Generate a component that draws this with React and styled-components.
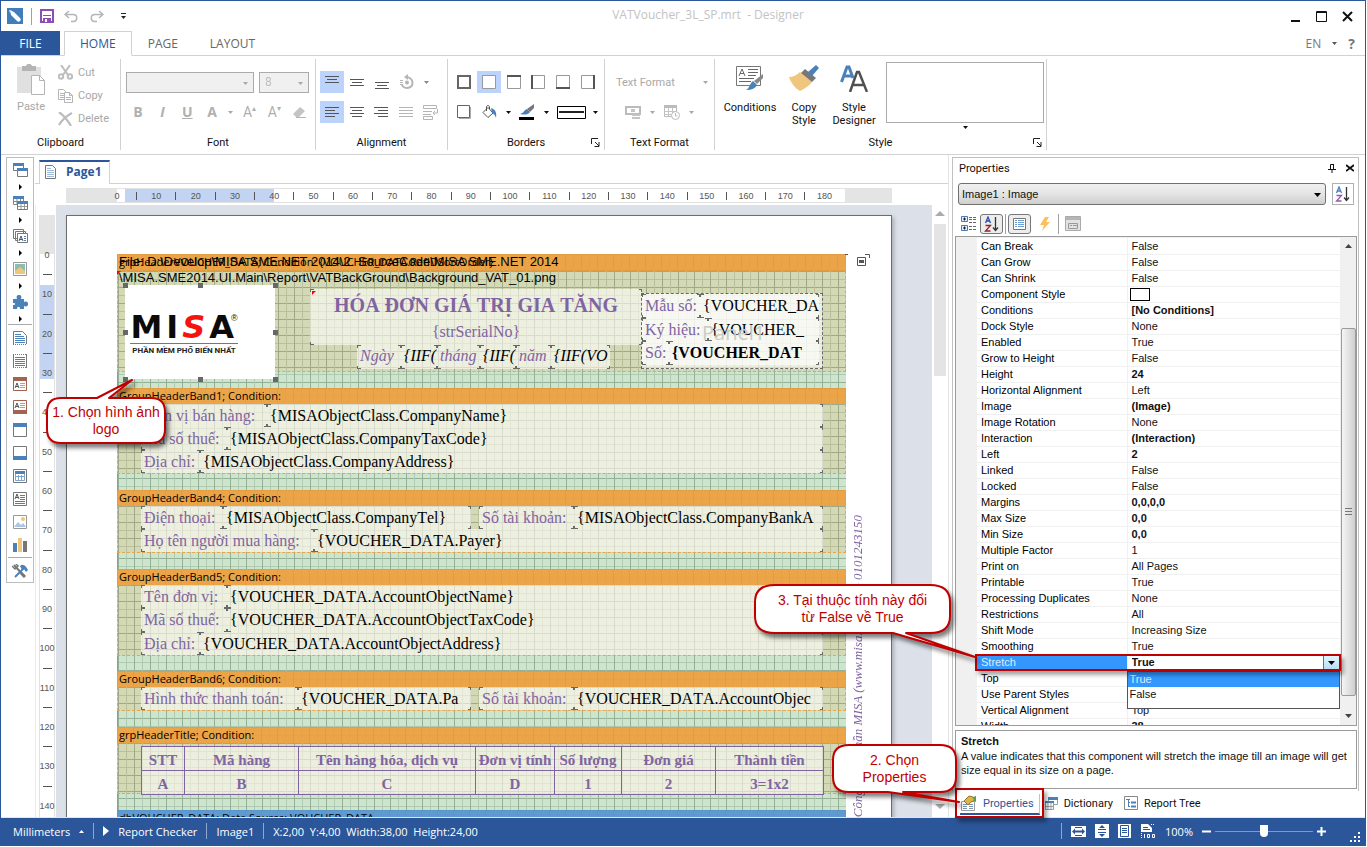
import React from 'react';
import styled, { createGlobalStyle, css } from 'styled-components';

const BLUE = '#2b579a';
const ORANGE = '#eba548';
const PURPLE = '#8064a2';
const RED = '#c00000';
const SANS = '"Liberation Sans", Arial, sans-serif';
const UI = '"Open Sans", "Noto Sans", sans-serif';
const RIBBON = 'Roboto, "Liberation Sans", sans-serif';
const SERIF = '"Liberation Serif", "Times New Roman", serif';

const Global = createGlobalStyle`
  * { box-sizing: border-box; }
  body { margin: 0; padding: 0 1px 1px 0; background: #fff; overflow: hidden; }
  button, select, input { font: inherit; color: inherit; margin: 0; padding: 0; border: 0; background: none; }
  button { cursor: pointer; }
  svg { display: block; flex: none; }
`;

const Window = styled.div`
  position: relative;
  display: flex;
  flex-direction: column;
  height: calc(100vh - 1px);
  border: 1px solid ${BLUE};
  border-bottom: 0;
  background: #fff;
  font: 12px ${UI};
  color: #111;
`;

/* ---------- title bar and tabs ---------- */

const TitleBar = styled.header`
  display: flex;
  align-items: center;
  height: 30px;
  padding: 0 12px 0 6px;
`;

const Quick = styled.div`
  display: flex;
  align-items: center;
  gap: 8px;
  flex: 1;
`;

const Title = styled.h1`
  margin: 0;
  padding: 0 0 4px 56px;
  font: 12px ${UI};
  color: #c3c3c3;
  white-space: pre;
`;

const WindowButtons = styled.div`
  display: flex;
  flex: 1;
  justify-content: flex-end;
  gap: 15px;
`;

const IconButton = styled.button`
  display: flex;
  align-items: center;
  justify-content: center;
  ${p => p.$w && `width: ${p.$w}px;`}
`;

const Rule = styled.span`
  width: 1px;
  height: ${p => p.$h || 16}px;
  background: ${p => p.$color || '#a0a0a0'};
`;

const Tabs = styled.nav`
  display: flex;
  align-items: stretch;
  height: 25px;
  padding-right: 10px;
  border-bottom: 1px solid #d2d2d2;
  color: #5a5a5a;
`;

const FileTab = styled.button`
  width: 59px;
  margin-right: 4px;
  background: ${BLUE};
  color: #fff;
`;

const Tab = styled.button`
  padding: 0 15px;
  margin-bottom: -1px;
  border: 1px solid ${p => (p.$active ? '#d2d2d2' : 'transparent')};
  border-bottom-color: ${p => (p.$active ? '#fff' : 'transparent')};
  color: ${p => (p.$active ? BLUE : '#666')};
`;

const Language = styled.div`
  display: flex;
  align-items: center;
  gap: 11px;
  margin-left: auto;
  color: #777;
  b { font-size: 14px; }
`;

/* ---------- ribbon ---------- */

const Ribbon = styled.div`
  display: flex;
  height: 99px;
  padding: 3px 0 4px;
  border-bottom: 1px solid #d2d2d2;
  font: 11px ${RIBBON};
`;

const Group = styled.section`
  position: relative;
  display: flex;
  flex-direction: column;
  width: ${p => p.$w}px;
  border-right: 1px solid #d2d2d2;
  padding: 0 4px;
`;

const GroupBody = styled.div`
  flex: 1;
  display: flex;
  flex-direction: ${p => (p.$rows ? 'column' : 'row')};
  gap: ${p => p.$gap || 0}px;
  padding: ${p => p.$pad || 0}px 0 0 ${p => p.$left || 0}px;
  color: ${p => (p.$off ? '#a8a8a8' : '#111')};
`;

const GroupName = styled.h2`
  margin: 0;
  height: 15px;
  font: 11px/15px ${RIBBON};
  text-align: center;
`;

const Launcher = styled.button`
  position: absolute;
  right: 4px;
  bottom: 3px;
`;

const Line = styled.div`
  display: flex;
  align-items: center;
  gap: ${p => p.$gap || 0}px;
  height: 22px;
  white-space: nowrap;
`;

const Cell = styled.button`
  display: flex;
  align-items: center;
  justify-content: center;
  width: ${p => p.$w || 24}px;
  height: 22px;
  background: ${p => (p.$on ? '#bcd3fb' : 'none')};
`;

const Glyph = styled.span`
  font: ${p => (p.$bold ? 'bold' : 'normal')} 14px/16px ${p => (p.$bold ? UI : RIBBON)};
  color: #b0b0b0;
  sup { font-size: 8px; line-height: 8px; }
`;

const BigButton = styled.button`
  display: flex;
  flex: none;
  flex-direction: column;
  align-items: center;
  gap: 5px;
  width: ${p => p.$w}px;
  padding-top: 3px;
  line-height: 13px;
  span { height: 31px; }
`;

const SmallButton = styled.button`
  display: flex;
  align-items: center;
  gap: 5px;
  height: 23px;
`;

const Combo = styled.span`
  position: relative;
  display: flex;
  width: ${p => p.$w}px;
  height: 21px;
  border: 1px solid #ababab;
  background: #f0f0f0;
  select {
    appearance: none;
    width: 100%;
    padding-left: 5px;
    font-size: 12px;
  }
  svg { position: absolute; right: 5px; top: 9px; }
`;

const Gallery = styled.div`
  width: 158px;
  height: 61px;
  border: 1px solid #ababab;
`;

const GalleryBox = styled.div`
  display: flex;
  flex: none;
  flex-direction: column;
  align-items: center;
  gap: 3px;
  margin-left: 5px;
`;

/* ---------- workspace ---------- */

const Workspace = styled.main`
  flex: 1;
  min-height: 0;
  display: flex;
`;

const Toolbox = styled.aside`
  align-self: flex-start;
  display: flex;
  flex-direction: column;
  align-items: center;
  width: 28px;
  margin: 2px 1px 0 5px;
  border: 1px solid #bdbdbd;
`;

const Tool = styled.button`
  display: flex;
  align-items: center;
  justify-content: center;
  width: 26px;
  height: ${p => (p.$menu ? 24 : 23)}px;
`;

const ToolMenu = styled.button`
  display: flex;
  align-items: center;
  justify-content: center;
  width: 26px;
  height: 9px;
`;

const ToolRule = styled.span`
  width: 24px;
  height: 1px;
  margin: 1px 0;
  background: #ababab;
`;

const Editor = styled.section`
  flex: 1;
  min-width: 0;
  display: flex;
  flex-direction: column;
  padding-top: 5px;
  margin-right: 3px;
  border-right: 1px solid #e4e4e4;
`;

const PageTabs = styled.div`
  display: flex;
  height: 24px;
  padding-left: 4px;
  border-bottom: 1px solid #d2d2d2;
`;

const PageTab = styled.button`
  display: flex;
  align-items: center;
  gap: 10px;
  width: 71px;
  padding: 0 0 3px 5px;
  margin-bottom: -1px;
  border: 1px solid #d2d2d2;
  border-top: 2px solid ${BLUE};
  border-bottom: 0;
  background: #fff;
  color: ${BLUE};
  font: bold 12px ${UI};
`;

const HRuler = styled.div`
  display: flex;
  width: 826px;
  height: 15px;
  margin: 4px 0 2px 31px;
  border: solid #e2e2e2;
  border-width: 1px 0;
  background: #e4e4e4;
`;

const HScale = styled.div`
  flex: 1;
  margin: 0 47px 0 51px;
  padding-right: 20px;
  display: flex;
  align-items: center;
  justify-content: space-between;
  background: linear-gradient(90deg, #fff 8px, #c2d4f2 8px 157px, #fff 157px);
`;

const Mark = styled.span`
  display: flex;
  align-items: center;
  justify-content: center;
  width: 0;
  height: 0;
  font: 9px ${SANS};
  color: #555;
  &::before {
    content: '';
    flex: none;
    width: ${p => (p.$tick ? (p.$vertical ? 9 : 1) : 0)}px;
    height: ${p => (p.$tick ? (p.$vertical ? 1 : 8) : 0)}px;
    background: #555;
  }
`;

const Desk = styled.div`
  flex: 1;
  min-height: 0;
  display: flex;
  border-left: 1px solid #ececec;
`;

const VRuler = styled.div`
  width: 16px;
  margin: 10px 1px 0 3px;
  padding-top: 40px;
  display: flex;
  flex-direction: column;
  border: solid #e2e2e2;
  border-width: 0 1px;
  background: linear-gradient(#e4e4e4 39px, #fff 39px 70px, #c2d4f2 70px 164px, #fff 164px);
`;

const VScale = styled.div`
  height: 551px;
  flex: none;
  display: flex;
  flex-direction: column;
  align-items: center;
  justify-content: space-between;
`;

const Canvas = styled.div`
  flex: 1;
  min-width: 0;
  overflow: hidden;
  padding: 10px;
  background: #dce1e9;
`;

const Scroller = styled.div`
  width: 16px;
  display: flex;
  flex-direction: column;
  align-items: center;
  justify-content: space-between;
  padding: 5px 0 7px;
`;

const Thumb = styled.span`
  width: 12px;
  height: 152px;
  margin: 8px 0 auto;
  background: #e4e4e4;
`;

const Paper = styled.article`
  position: relative;
  width: 826px;
  height: 900px;
  padding: 38px 45px 0 50px;
  border: 1px solid #6c6c6c;
  background: #fff;
  box-shadow: 2px 2px 4px #a9adb5;
  font: 16px/24px ${SERIF};
  color: #000;
  * { font-kerning: none; }
`;

/* ---------- bands ---------- */

const grid = (strong, weak) => css`
  background-image:
    linear-gradient(90deg, ${strong} 1px, transparent 1px),
    linear-gradient(90deg, transparent 8px, ${weak} 8px, ${weak} 9px, transparent 9px),
    linear-gradient(${strong} 1px, transparent 1px),
    linear-gradient(transparent 8px, ${weak} 8px, ${weak} 9px, transparent 9px);
  background-size: 16px 16px;
`;

const Report = styled.div`
  width: 729px;
  border-left: 1px solid #8aa287;
  ${grid('#94b096', '#afcab0')}
  background-color: #cde5cd;
`;

const BandHead = styled.div`
  height: ${p => p.$h || 16}px;
  margin-left: -1px;
  padding-left: 2px;
  ${grid('#e29d43', '#e7a146')}
  background-color: ${p => p.$color || ORANGE};
  font: 11px/15px ${UI};
  white-space: nowrap;
`;

const DataHead = styled(BandHead)`
  ${grid('#5a94c9', '#5d98ce')}
`;

const BandBody = styled.div`
  position: relative;
  display: flex;
  flex-direction: column;
  height: ${p => p.$h}px;
  margin: 0 0 ${p => p.$after || 16}px -1px;
  padding: 0 22px 0 23px;
  border: 1px dashed ${ORANGE};
  border-top: 0;
  ${grid('#a1a888', '#bac09c')}
  background-color: #d3d9b4;
`;

const FieldRow = styled.div`
  flex: 1;
  min-height: 0;
  display: flex;
`;

const corner = '#66696a';

// small brackets in the four corners of every component
const brackets = css`
  background:
    linear-gradient(${corner}, ${corner}) 0 0 / 4px 1px,
    linear-gradient(${corner}, ${corner}) 0 0 / 1px 3px,
    linear-gradient(${corner}, ${corner}) 100% 0 / 3px 1px,
    linear-gradient(${corner}, ${corner}) 100% 0 / 1px 3px,
    linear-gradient(${corner}, ${corner}) 0 100% / 4px 1px,
    linear-gradient(${corner}, ${corner}) 0 100% / 1px 3px,
    linear-gradient(${corner}, ${corner}) 100% 100% / 3px 1px,
    linear-gradient(${corner}, ${corner}) 100% 100% / 1px 3px,
    rgba(255, 255, 255, 0.58);
  background-repeat: no-repeat;
`;

const Field = styled.div`
  ${p => (p.$w ? `width: ${p.$w}px; flex: none;` : 'flex: 1; min-width: 0;')}
  margin-right: ${p => p.$after || 0}px;
  padding-left: 3px;
  overflow: hidden;
  white-space: nowrap;
  color: ${p => (p.$label ? PURPLE : '#000')};
  font-weight: ${p => (p.$bold ? 'bold' : 'normal')};
  ${brackets}
`;

// component placed freely inside the page header band
const Placed = styled.div`
  position: absolute;
  left: ${p => p.$x}px;
  top: ${p => p.$y}px;
  width: ${p => p.$w}px;
  height: ${p => p.$h}px;
`;

const TitleBox = styled(Placed)`
  ${brackets}
  text-align: center;
  color: ${PURPLE};
  line-height: 20px;
  strong {
    display: block;
    font-size: 20px;
    line-height: 33px;
  }
`;

const DateRow = styled(Placed)`
  display: flex;
  font-style: italic;
  line-height: 22px;
`;

const Panel = styled(Placed)`
  display: flex;
  flex-direction: column;
  padding: 0 3px 3px 0;
  border: 1px dashed #66696a;
  background: rgba(255, 255, 255, 0.56);
`;

const PanelName = styled.span`
  position: absolute;
  left: 60px;
  top: 25px;
  font: 20px/28px ${UI};
  color: #c9ccc6;
`;

const FileNote = styled(Placed)`
  font: 13px/16px ${SANS};
  white-space: nowrap;
`;

const Flag = styled(Placed)`
  border-top: 4px solid #f00;
  border-right: 4px solid transparent;
`;

const Picture = styled(Placed)`
  display: flex;
  flex-direction: column;
  align-items: center;
  padding: 27px 32px 0 0;
  background: #fff;
`;

const Brand = styled.div`
  display: flex;
  align-items: flex-start;
  gap: 4px;
  border-bottom: 1px solid #777;
  font: bold 32px/31px "DejaVu Sans", sans-serif;
  color: #0d0a0a;
  em { color: #f5130f; }
  sup { font: 9px/12px ${SANS}; margin-left: -7px; }
`;

const Slogan = styled.div`
  font: bold 8px/13px Roboto, sans-serif;
  color: #222;
  white-space: nowrap;
`;

const Handle = styled.i`
  position: absolute;
  left: ${p => p.$x}px;
  top: ${p => p.$y}px;
  width: 5px;
  height: 5px;
  background: #66696a;
`;

const Columns = styled.table`
  width: 100%;
  height: 47px;
  margin-top: 3px;
  table-layout: fixed;
  border-collapse: collapse;
  background: rgba(255, 255, 255, 0.56);
  color: ${PURPLE};
  font: bold 15px/20px ${SERIF};
  white-space: nowrap;
  th, td {
    height: 23px;
    padding: 3px 0 0;
    border: 1px solid ${PURPLE};
    text-align: center;
  }
`;

const Imprint = styled.div`
  position: absolute;
  right: 24px;
  top: 299px;
  writing-mode: vertical-rl;
  transform: rotate(180deg);
  font: italic 13px/18px ${SERIF};
  color: ${PURPLE};
  white-space: nowrap;
`;

const PageMarker = styled.div`
  position: absolute;
  right: 21px;
  top: 37px;
`;

/* ---------- properties panel ---------- */

const Side = styled.aside`
  width: 407px;
  margin: 2px 6px 0 0;
  display: flex;
  flex-direction: column;
  font: 11px ${SANS};
`;

const SideFrame = styled.section`
  flex: 1;
  min-height: 0;
  display: flex;
  flex-direction: column;
  padding: 0 1px 2px 2px;
  border: solid #c0c0c0;
  border-width: 1px 1px 0;
`;

const SideHead = styled.header`
  display: flex;
  align-items: center;
  gap: 10px;
  height: 20px;
  padding: 0 3px 0 4px;
  font: 11px ${RIBBON};
  span { flex: 1; }
`;

const PickerRow = styled.div`
  display: flex;
  gap: 6px;
  padding: 5px 3px 6px 3px;
`;

const Picker = styled.span`
  position: relative;
  flex: 1;
  height: 22px;
  border: 1px solid #707070;
  border-radius: 3px;
  background: linear-gradient(#f0f0f0, #e4e4e4 50%, #cfcfcf);
  select {
    appearance: none;
    width: 100%;
    height: 20px;
    padding-left: 3px;
  }
  svg { position: absolute; right: 4px; top: 9px; }
`;

const SortButton = styled.button`
  width: 22px;
  height: 22px;
  display: flex;
  align-items: center;
  justify-content: center;
  border: 1px solid #b0b0b0;
`;

const PropTools = styled.div`
  display: flex;
  align-items: center;
  gap: 2px;
  height: 25px;
  padding-left: 6px;
`;

const PropTool = styled.button`
  display: flex;
  align-items: center;
  justify-content: center;
  width: 23px;
  height: 20px;
  border: ${p => (p.$on ? '1px solid #777' : '0')};
  border-radius: 3px;
  background: ${p => (p.$on ? '#ededed' : 'none')};
`;

const PropFrame = styled.div`
  flex: 1;
  min-height: 0;
  display: flex;
  border: 1px solid #9b9b9b;
  overflow: hidden;
  background: #f0f0f0;
`;

const PropTable = styled.table`
  flex: 1;
  align-self: flex-start;
  margin: 1px 0 0 21px;
  border-collapse: collapse;
  border-top: 1px solid #fff;
  table-layout: fixed;
  background: #fff;
  th, td {
    position: relative;
    height: 16px;
    padding: 0 0 0 4px;
    border-bottom: 1px solid #f0f0f0;
    text-align: left;
    line-height: 15px;
  }
  th {
    width: 150px;
    border-right: 1px solid #f0f0f0;
    font-weight: normal;
  }
`;

const PropRow = styled.tr`
  th {
    background: ${p => (p.$selected ? '#3397fd' : 'none')};
    color: ${p => (p.$selected ? '#dcecff' : '#000')};
  }
  td { font-weight: ${p => (p.$bold ? 'bold' : 'normal')}; }
`;

const Swatch = styled.span`
  display: block;
  width: 20px;
  height: 13px;
  margin-left: -2px;
  border: 1px solid #000;
`;

const ValueSelect = styled.span`
  display: flex;
  height: 15px;
  select {
    appearance: none;
    flex: 1;
    font-weight: bold;
  }
  i {
    display: flex;
    align-items: center;
    justify-content: center;
    width: 17px;
    border: 1px solid #3c7fb1;
    background: linear-gradient(#e3f4fc, #b5def5);
  }
`;

const Options = styled.ul`
  position: absolute;
  z-index: 2;
  left: -1px;
  right: 0;
  top: 16px;
  height: 38px;
  margin: 0;
  padding: 0;
  border: 1px solid #555;
  background: #fff;
  font-weight: normal;
  list-style: none;
  li { height: 15px; padding-left: 2px; line-height: 15px; }
  li[aria-selected='true'] { background: #3397fd; color: #dcecff; }
`;

const PropScroll = styled.div`
  width: 16px;
  display: flex;
  flex-direction: column;
  align-items: center;
  justify-content: space-between;
  padding: 7px 0;
`;

const PropThumb = styled.span`
  display: flex;
  align-items: center;
  justify-content: center;
  width: 15px;
  height: 368px;
  margin: auto 0 18px;
  border: 1px solid #9a9a9a;
  border-radius: 2px;
  background: linear-gradient(90deg, #f5f5f5, #e2e2e2 50%, #cfcfd0);
`;

const Hint = styled.div`
  height: 59px;
  margin-top: 4px;
  padding: 3px 5px;
  border: 1px solid #9b9b9b;
  line-height: 14px;
  strong { display: block; line-height: 15px; }
`;

const SideTabs = styled.div`
  display: flex;
  align-items: center;
  gap: 5px;
  height: 26px;
  padding-left: 8px;
  font: 11px ${RIBBON};
`;

const SideTab = styled.button`
  display: flex;
  align-items: center;
  gap: 6px;
  height: 21px;
  padding-right: 5px;
  border-right: 1px solid ${p => (p.$active ? '#c0c0c0' : 'transparent')};
  border-bottom: 2px solid ${p => (p.$active ? BLUE : 'transparent')};
  color: ${p => (p.$active ? BLUE : '#111')};
`;

/* ---------- status bar ---------- */

const Status = styled.footer`
  display: flex;
  align-items: center;
  gap: 9px;
  height: 29px;
  padding: 0 4px 2px 12px;
  border-top: 1px solid #dfe6f0;
  background: ${BLUE};
  color: #fff;
  font: 11px ${UI};
  white-space: pre;
`;

const Spacer = styled.span`
  flex: 1;
`;

const ZoomGroup = styled.div`
  display: flex;
  align-items: center;
  gap: 4px;
`;

const Zoom = styled.input`
  appearance: none;
  width: 98px;
  height: 14px;
  background: linear-gradient(#7d9bc9, #7d9bc9) 0 50% / 100% 1px no-repeat;
  &::-webkit-slider-thumb {
    appearance: none;
    width: 8px;
    height: 12px;
    border-radius: 0 0 4px 4px;
    background: #fff;
  }
`;

/* ---------- callouts ---------- */

const Callout = styled.div`
  position: absolute;
  z-index: 5;
  left: ${p => p.$x}px;
  top: ${p => p.$y}px;
  width: ${p => p.$w}px;
  height: ${p => p.$h}px;
  display: flex;
  align-items: center;
  justify-content: center;
  text-align: center;
  font: 14px/17px ${SANS};
  color: ${RED};
  svg {
    position: absolute;
    left: 0;
    top: 0;
    overflow: visible;
    filter: drop-shadow(3px 4px 2px rgba(0, 0, 0, 0.5));
  }
  span { position: relative; white-space: pre; }
`;

const Frame = styled.div`
  position: absolute;
  z-index: 4;
  inset: ${p => p.$inset};
  border: 2px solid ${RED};
  box-shadow: 3px 4px 4px rgba(0, 0, 0, 0.35);
  pointer-events: none;
`;

const SideTabWrap = styled.div`
  position: relative;
  display: flex;
`;

/* ---------- icons ---------- */

const Svg = ({ w = 16, h = w, children }) => (
  <svg width={w} height={h} viewBox={`0 0 ${w} ${h}`} fill="none" aria-hidden="true">
    {children}
  </svg>
);

const Down = ({ c = '#111' }) => (
  <Svg w={5} h={3}><path d="M0 0h5L2.500 3z" fill={c} /></Svg>
);

const Lines = ({ rows, c = '#555' }) => (
  <Svg w={14} h={16}>
    {rows.map(([x, y, w]) => <path key={y} d={`M${x} ${y}.5h${w}`} stroke={c} />)}
  </Svg>
);

const Box = ({ side }) => (
  <Svg w={14} h={14}>
    <path d="M.5.5h13v13H.5z" stroke={side === 'all' ? '#666' : '#999'} fill="#fff" />
    {side === 'all' && <path d="M1 1h12v12H1z" stroke="#666" strokeWidth="2" />}
    {side === 'top' && <path d="M0 1h14" stroke="#555" strokeWidth="2" />}
    {side === 'left' && <path d="M1 0v14" stroke="#555" strokeWidth="2" />}
    {side === 'bottom' && <path d="M0 13h14" stroke="#555" strokeWidth="2" />}
    {side === 'right' && <path d="M13 0v14" stroke="#555" strokeWidth="2" />}
  </Svg>
);

const ShadowIcon = () => (
  <Svg w={14} h={14}>
    <path d="M2 13.500h11.500V2" stroke="#aaa" />
    <path d="M.5.5h12v12H.5z" stroke="#666" fill="#fff" />
  </Svg>
);

const AppIcon = () => (
  <Svg>
    <path d="M0 0h16v16H0z" fill="#3f7dbd" />
    <path d="M3 2l4 2 6 6c1 1 1 2 0 3s-2 1-3 0L4 7z" fill="#fff" />
    <path d="M2 2l3 1-2 2z" fill="#dcebf8" />
  </Svg>
);

const SaveIcon = () => (
  <Svg w={14}>
    <path d="M1 1h12v12H1z" stroke="#8c4db5" strokeWidth="2" />
    <path d="M3 6.500h8" stroke="#8c4db5" />
    <path d="M3 9h8v4H3z" fill="#8c4db5" />
    <path d="M5 10h2v3H5z" fill="#fff" />
  </Svg>
);

const UndoIcon = ({ flip }) => (
  <Svg w={14} h={13}>
    <g transform={flip ? 'translate(14 0) scale(-1 1)' : undefined} stroke="#b5b5b5" strokeWidth="1.500">
      <path d="M5 1L1 4.500 5 8M1 4.500h8c5 0 5 7 0 7H7" />
    </g>
  </Svg>
);

const PasteIcon = () => (
  <Svg w={28} h={31}>
    <path d="M0 3h24v26H0z" fill="#e0e0e0" />
    <path d="M5 2h4c1-3 5-3 6 0h4v5H5z" fill="#b4b4b4" />
    <path d="M14.500 11.500h8l5 5v14h-13z" fill="#fff" stroke="#b4b4b4" />
    <path d="M22.500 11.500v5h5" stroke="#b4b4b4" />
  </Svg>
);

const CutIcon = () => (
  <Svg w={15} h={15}>
    <g stroke="#bdbdbd" strokeWidth="2">
      <path d="M3 0l7 10M12 0L5 10" />
      <circle cx="3" cy="11.500" r="2.200" />
      <circle cx="12" cy="11.500" r="2.200" />
    </g>
  </Svg>
);

const CopyIcon = () => (
  <Svg w={15} h={14}>
    <g stroke="#b5b5b5">
      <path d="M.5.5h5l2 2v8h-7zM2 4.500h4M2 6.500h4M2 8.500h4" />
      <path d="M6.500 3.500h5l3 3v7h-8z" fill="#fff" />
      <path d="M8 8.500h5M8 10.500h5M11.500 3.500v3h3" />
    </g>
  </Svg>
);

const DeleteIcon = () => (
  <Svg w={15} h={14}>
    <path d="M1 0c4 3 8 7 12 14M14 1C8 4 4 8 1 13" stroke="#bdbdbd" strokeWidth="2.200" />
  </Svg>
);

const RotateIcon = () => (
  <Svg w={14} h={16}>
    <path d="M6 3c8 0 9 11 1 11-3 0-5-2-5-4" stroke="#b5b5b5" strokeWidth="2" />
    <path d="M8 0v6L4 3z" fill="#b5b5b5" />
    <circle cx="7" cy="8.500" r="2" fill="#b5b5b5" />
    <path d="M0 6.500h3M0 8.500h3M0 10.500h3" stroke="#b5b5b5" />
  </Svg>
);

const WrapIcon = () => (
  <Svg w={16} h={15}>
    <g stroke="#b5b5b5">
      <path d="M.5.5h13v3H.5zM0 6.500h9M0 9.500h8M.5 11.500h9v3h-9z" />
      <path d="M14.500 4v4H10M12 6l-2 2 2 2" />
    </g>
  </Svg>
);

const EraserIcon = () => (
  <Svg w={14} h={14}>
    <path d="M1 9l7-7 5 4-6 6H4z" fill="#c4c4c4" />
    <path d="M4 12.500h10" stroke="#b5b5b5" />
  </Svg>
);

const PaintIcon = () => (
  <Svg w={15} h={14}>
    <path d="M6 2.500L11 8l-5 4.500L1 7.500z" stroke="#555" />
    <path d="M4.500 6V2c0-2 3-2 3 0v2" stroke="#555" />
    <path d="M9 3c4 1 6 4 5 10-1-3-2-4-4-5z" fill="#4a81b8" />
  </Svg>
);

const PenIcon = () => (
  <Svg w={16} h={16}>
    <path d="M15 0v4l-4 4-3-3z" fill="#777" />
    <path d="M8 5l3 3c-2 3-6 3-10 2 4-1 4-4 7-5z" fill="#4a81b8" />
    <path d="M0 13h15v3H0z" fill="#000" />
  </Svg>
);

const MoneyIcon = () => (
  <Svg w={16} h={15}>
    <path d="M1 2h14v7H1z" stroke="#bbb" strokeWidth="2" />
    <path d="M6 4h4v3H6zM7 9h8v5H7z" fill="#c4c4c4" />
    <path d="M7 11.500h8" stroke="#fff" />
  </Svg>
);

const DateIcon = () => (
  <Svg w={16} h={16}>
    <path d="M.5 1.500h12v11H.5z" stroke="#bbb" />
    <path d="M0 1h13v3H0z" fill="#bbb" />
    <path d="M0 7.500h12M0 10.500h12M4.500 4v8M8.500 4v8" stroke="#c4c4c4" />
    <circle cx="11.500" cy="11.500" r="4" fill="#fff" stroke="#bbb" />
    <path d="M11.500 9v3h2" stroke="#bbb" />
  </Svg>
);

const ConditionsIcon = () => (
  <Svg w={28} h={26}>
    <path d="M.5 1.500h24v19H.5z" stroke="#777" fill="#fff" />
    <path d="M3 11l3-7 3 7M4 8.500h4M12 4.500h10M12 7.500h10M12 10.500h8M3 13.500h15M3 16.500h12" stroke="#666" />
    <path d="M27 9v4l-6 6-3-3z" fill="#888" />
    <path d="M17 16l4 4c-2 4-6 5-11 5 4-2 3-6 7-9z" fill="#4a81b8" />
  </Svg>
);

const BroomIcon = () => (
  <Svg w={30} h={26}>
    <path d="M0 12c4 0 8-2 11-5l12 10c-2 3-6 6-12 9C6 23 2 18 0 12z" fill="#efc67b" />
    <path d="M12 8l4-4 11 9-4 4z" fill="#777" />
    <path d="M19 7l8-7 3 3-7 8z" fill="#4a81b8" />
  </Svg>
);

const DesignerIcon = () => (
  <Svg w={28} h={27}>
    <path d="M1.500 17L7 2h2l4 11M4 11h8" stroke="#4a81b8" strokeWidth="3" />
    <path d="M10 27l7-20h2l8 20M13 20h12" stroke="#505050" strokeWidth="2.500" />
  </Svg>
);

const LauncherIcon = () => (
  <Svg w={9} h={9}>
    <path d="M.5 6V.5H7M4 4l4 4M8 4v4.500H3.500" stroke="#222" />
  </Svg>
);

const PageIcon = () => (
  <Svg w={11} h={14}>
    <path d="M.5.5h7l3 3v10H.5z" stroke="#777" />
    <path d="M2 3.500h4M2 5.500h7M2 7.500h7M2 9.500h7M2 11.500h7" stroke="#9cbbdc" />
  </Svg>
);

const Sheet = ({ head = '#4a81b8', children, line = '#777' }) => (
  <Svg w={14} h={14}>
    <path d="M.5.5h13v13H.5z" stroke={line} fill="#fff" />
    {head && <path d="M0 0h14v4H0z" fill={head} />}
    {children}
  </Svg>
);

const tools = {
  bands: (
    <Svg w={15} h={14}>
      <path d="M.5.5h10v7H.5z" stroke="#777" fill="#fff" /><path d="M0 0h11v3H0z" fill="#4a81b8" />
      <path d="M4.500 5.500h10v8h-10z" stroke="#777" fill="#fff" /><path d="M4 5h11v3H4z" fill="#4a81b8" />
    </Svg>
  ),
  cross: (
    <Svg w={15} h={14}>
      <path d="M.5.5h10v8H.5zM4 1v7M7.500 1v7M1 5.500h9" stroke="#888" /><path d="M0 0h11v3H0z" fill="#4a81b8" />
      <path d="M4.500 5.500h10v8h-10z" stroke="#777" fill="#fff" /><path d="M8 6v7M11.500 6v7M5 10.500h9" stroke="#999" />
      <path d="M4 5h11v3H4z" fill="#4a81b8" />
    </Svg>
  ),
  texts: (
    <Svg w={15} h={14}>
      <path d="M.5.5h10v9H.5zM2.500 2.500h10v9h-10z" stroke="#777" fill="#fff" />
      <path d="M4.500 4.500h10v9h-10z" stroke="#777" fill="#fff" />
      <path d="M6 12l2-5 2 5M7 10.500h2" stroke="#555" /><path d="M11 7.500h2M11 9.500h2M11 11.500h2" stroke="#4a81b8" />
    </Svg>
  ),
  picture: (
    <Sheet head={null} line="#999">
      <path d="M2 2h10v9H2z" fill="#8fbcae" /><path d="M2 12V9l5-4 5 4v3z" fill="#efc67b" />
    </Sheet>
  ),
  puzzle: (
    <Svg w={15} h={14}>
      <path d="M0 4h4c-1-3 0-4 2-4s3 1 2 4h3v3c3-1 4 0 4 2s-1 3-4 2v3H7c0-3-3-3-3 0H0v-4c3 0 3-2 0-2z" fill="#4a81b8" />
    </Svg>
  ),
  torn1: (
    <Svg w={14} h={14}>
      <path d="M.5 13V.5h9l4 4V13" stroke="#777" /><path d="M0 13.500h14" stroke="#777" strokeDasharray="1 1" />
      <path d="M2 3.500h6M2 5.500h9M2 7.500h10M2 9.500h10M2 11.500h10" stroke="#4a81b8" />
    </Svg>
  ),
  torn2: (
    <Svg w={14} h={14}>
      <path d="M.5 0v14M13.500 0v14" stroke="#777" /><path d="M0 .5h14M0 13.500h14" stroke="#777" strokeDasharray="1 1" />
      <path d="M2 3.500h10M2 5.500h10M2 7.500h10M2 9.500h10M2 11.500h10" stroke="#4a81b8" />
    </Svg>
  ),
  head: (
    <Sheet head="#a5624f" line="#a5624f">
      <path d="M2 11l2-5 2 5M3 9.500h2" stroke="#555" /><path d="M7 6.500h5M7 8.500h5M7 10.500h5" stroke="#c79a8c" />
    </Sheet>
  ),
  foot: (
    <Sheet head={null} line="#a5624f">
      <path d="M0 10h14v4H0z" fill="#a5624f" />
      <path d="M2 8l2-5 2 5M3 6.500h2" stroke="#555" /><path d="M7 3.500h5M7 5.500h5M7 7.500h5" stroke="#c79a8c" />
    </Sheet>
  ),
  top: <Sheet />,
  bottom: <Sheet head={null}><path d="M0 10h14v4H0z" fill="#4a81b8" /></Sheet>,
  calendar: (
    <Sheet head={null}>
      <path d="M2.500 3.500h9v8h-9zM3 7.500h8M5.500 6v5M8.500 6v5" stroke="#7fa5cd" /><path d="M2 2h10v3H2z" fill="#4a81b8" />
    </Sheet>
  ),
  rich: (
    <Sheet head={null}>
      <path d="M2 7l2-5 2 5M3 5.500h2" stroke="#555" /><path d="M7 3.500h5M7 5.500h5M7 7.500h5M2 9.500h10M2 11.500h10" stroke="#4a81b8" />
    </Sheet>
  ),
  image: (
    <Sheet head={null} line="#999">
      <circle cx="10" cy="4" r="2" fill="#efc67b" /><path d="M1 12l4-5 3 3 2-2 3 4z" fill="#aac6e2" />
    </Sheet>
  ),
  chart: (
    <Svg w={14} h={14}>
      <path d="M0 5h4v9H0z" fill="#4a81b8" /><path d="M5 0h4v14H5z" fill="#efc67b" /><path d="M10 3h4v11h-4z" fill="#777" />
    </Svg>
  ),
  hammer: (
    <Svg w={16} h={14}>
      <path d="M2 1l10 11" stroke="#777" strokeWidth="2" /><path d="M0 2l3 3 3-3-2-2" stroke="#777" strokeWidth="1.500" />
      <path d="M3 13l9-9" stroke="#4a81b8" strokeWidth="2" /><path d="M8 2c3-3 6 0 8 4l-2 2-2-3-2 1z" fill="#4a81b8" />
      <path d="M9 9l4 4" stroke="#777" strokeWidth="3" />
    </Svg>
  ),
};

const SortIcon = ({ a = '#4a81b8', z = '#9257b5' }) => (
  <Svg w={16} h={16}>
    <path d="M1.500 7l2.500-6 2.500 6M2.500 5h3" stroke={a} strokeWidth="1.300" />
    <path d="M1.500 9.500h5l-5 5.500h5" stroke={z} strokeWidth="1.300" />
    <path d="M11.500 1v13M9 11.500l2.500 3 2.500-3" stroke="#333" strokeWidth="1.300" />
  </Svg>
);

/* ---------- data ---------- */

const properties = [
  ['Can Break', 'False'], ['Can Grow', 'False'], ['Can Shrink', 'False'], ['Component Style', null],
  ['Conditions', '[No Conditions]', true], ['Dock Style', 'None'], ['Enabled', 'True'],
  ['Grow to Height', 'False'], ['Height', '24', true], ['Horizontal Alignment', 'Left'],
  ['Image', '(Image)', true], ['Image Rotation', 'None'], ['Interaction', '(Interaction)', true],
  ['Left', '2', true], ['Linked', 'False'], ['Locked', 'False'], ['Margins', '0,0,0,0', true],
  ['Max Size', '0,0', true], ['Min Size', '0,0', true], ['Multiple Factor', '1'],
  ['Print on', 'All Pages'], ['Printable', 'True'], ['Processing Duplicates', 'None'],
  ['Restrictions', 'All'], ['Shift Mode', 'Increasing Size'], ['Smoothing', 'True'],
  ['Stretch', 'True', true], ['Top', '', true], ['Use Parent Styles', ''],
  ['Vertical Alignment', 'Top'], ['Width', '38', true],
];

const bands = [
  {
    name: 'GroupHeaderBand1; Condition:',
    h: 70,
    rows: [
      [['Đơn vị bán hàng:', 126], ['{MISAObjectClass.CompanyName}']],
      [['Mã số thuế:', 86], ['{MISAObjectClass.CompanyTaxCode}']],
      [['Địa chỉ:', 59], ['{MISAObjectClass.CompanyAddress}']],
    ],
  },
  {
    name: 'GroupHeaderBand4; Condition:',
    h: 47,
    rows: [
      [['Điện thoại:', 82], ['{MISAObjectClass.CompanyTel}', 248, 8], ['Số tài khoản:', 95], ['{MISAObjectClass.CompanyBankA']],
      [['Họ tên người mua hàng:', 173], ['{VOUCHER_DATA.Payer}']],
    ],
  },
  {
    name: 'GroupHeaderBand5; Condition:',
    h: 71,
    after: 15,
    rows: [
      [['Tên đơn vị:', 86], ['{VOUCHER_DATA.AccountObjectName}']],
      [['Mã số thuế:', 86], ['{VOUCHER_DATA.AccountObjectTaxCode}']],
      [['Địa chỉ:', 59], ['{VOUCHER_DATA.AccountObjectAddress}']],
    ],
  },
  {
    name: 'GroupHeaderBand6; Condition:',
    h: 24,
    rows: [
      [['Hình thức thanh toán:', 157], ['{VOUCHER_DATA.Pa', 173, 8], ['Số tài khoản:', 95], ['{VOUCHER_DATA.AccountObjec']],
    ],
  },
];

const columns = [
  ['STT', 'A', 43], ['Mã hàng', 'B', 114], ['Tên hàng hóa, dịch vụ', 'C', 177], ['Đơn vị tính', 'D', 79],
  ['Số lượng', '1', 67], ['Đơn giá', '2', 94], ['Thành tiền', '3=1x2', 108],
];

const marks = last => Array.from({ length: last * 2 + 1 }, (_, i) => i);

/* ---------- parts ---------- */

function RibbonBar() {
  const off = '#a8a8a8';
  return (
    <Ribbon>
      <Group $w={120}>
        <GroupBody $off $left={9} $gap={10} $pad={2}>
          <BigButton $w={34}><span><PasteIcon /></span>Paste</BigButton>
          <div>
            <SmallButton><CutIcon />Cut</SmallButton>
            <SmallButton><CopyIcon />Copy</SmallButton>
            <SmallButton><DeleteIcon />Delete</SmallButton>
          </div>
        </GroupBody>
        <GroupName>Clipboard</GroupName>
      </Group>
      <Group $w={195}>
        <GroupBody $off $rows $gap={8} $pad={12} $left={1}>
          <Line $gap={5}>
            <Combo $w={128}><select aria-label="Font" disabled><option> </option></select><Down c={off} /></Combo>
            <Combo $w={50}><select aria-label="Font size" disabled><option>8</option></select><Down c={off} /></Combo>
          </Line>
          <Line $gap={1}>
            <Cell><Glyph $bold>B</Glyph></Cell>
            <Cell><Glyph $bold><i>I</i></Glyph></Cell>
            <Cell><Glyph $bold><u>U</u></Glyph></Cell>
            <Cell><Glyph $bold>A</Glyph></Cell>
            <Cell $w={12}><Down c={off} /></Cell>
            <Cell><Glyph>A<sup>▴</sup></Glyph></Cell>
            <Cell><Glyph>A<sup>▾</sup></Glyph></Cell>
            <Cell><EraserIcon /></Cell>
          </Line>
        </GroupBody>
        <GroupName>Font</GroupName>
      </Group>
      <Group $w={132}>
        <GroupBody $rows $gap={8} $pad={12}>
          <Line $gap={1}>
            <Cell $on aria-label="Top"><Lines rows={[[0, 2, 14], [2, 5, 10], [0, 8, 14]]} /></Cell>
            <Cell aria-label="Middle"><Lines rows={[[0, 5, 14], [2, 8, 10], [0, 11, 14]]} /></Cell>
            <Cell aria-label="Bottom"><Lines rows={[[0, 8, 14], [2, 11, 10], [0, 14, 14]]} /></Cell>
            <Cell aria-label="Rotate"><RotateIcon /></Cell>
            <Cell $w={12} aria-label="Rotate menu"><Down c="#888" /></Cell>
          </Line>
          <Line $gap={1}>
            <Cell $on aria-label="Left"><Lines rows={[[0, 3, 14], [0, 6, 10], [0, 9, 14], [0, 12, 10]]} /></Cell>
            <Cell aria-label="Center"><Lines rows={[[0, 3, 14], [2, 6, 10], [0, 9, 14], [2, 12, 10]]} /></Cell>
            <Cell aria-label="Right"><Lines rows={[[0, 3, 14], [4, 6, 10], [0, 9, 14], [4, 12, 10]]} /></Cell>
            <Cell aria-label="Justify"><Lines c="#b5b5b5" rows={[[0, 3, 14], [0, 6, 14], [0, 9, 14], [0, 12, 14]]} /></Cell>
            <Cell aria-label="Wrap"><WrapIcon /></Cell>
          </Line>
        </GroupBody>
        <GroupName>Alignment</GroupName>
      </Group>
      <Group $w={157}>
        <GroupBody $rows $gap={8} $pad={12}>
          <Line $gap={1}>
            {['all', 'none', 'top', 'left', 'bottom', 'right'].map(side =>
              <Cell key={side} $on={side === 'none'} aria-label={side}><Box side={side} /></Cell>
            )}
          </Line>
          <Line $gap={1}>
            <Cell aria-label="Shadow"><ShadowIcon /></Cell>
            <Cell aria-label="Fill"><PaintIcon /></Cell>
            <Cell $w={12} aria-label="Fill menu"><Down /></Cell>
            <Cell aria-label="Color"><PenIcon /></Cell>
            <Cell $w={12} aria-label="Color menu"><Down /></Cell>
            <Cell $w={36} aria-label="Style">
              <Svg w={29} h={13}><path d="M.5.5h28v12H.5z" stroke="#000" /><path d="M2 6h25" stroke="#222" strokeWidth="2" /></Svg>
            </Cell>
            <Cell $w={10} aria-label="Style menu"><Down /></Cell>
          </Line>
        </GroupBody>
        <GroupName>Borders</GroupName>
        <Launcher aria-label="Border options"><LauncherIcon /></Launcher>
      </Group>
      <Group $w={110}>
        <GroupBody $off $rows $gap={8} $pad={12} $left={7}>
          <Line $gap={28}>Text Format<Down c={off} /></Line>
          <Line>
            <Cell $w={34} aria-label="Currency"><MoneyIcon /></Cell>
            <Down c={off} />
            <Cell $w={34} aria-label="Date"><DateIcon /></Cell>
            <Down c={off} />
          </Line>
        </GroupBody>
        <GroupName>Text Format</GroupName>
      </Group>
      <Group $w={332}>
        <GroupBody $pad={3}>
          <BigButton $w={62}><span><ConditionsIcon /></span>Conditions</BigButton>
          <BigButton $w={46}><span><BroomIcon /></span>Copy Style</BigButton>
          <BigButton $w={54}><span><DesignerIcon /></span>Style Designer</BigButton>
          <GalleryBox><Gallery /><Down /></GalleryBox>
        </GroupBody>
        <GroupName>Style</GroupName>
        <Launcher aria-label="Style options"><LauncherIcon /></Launcher>
      </Group>
    </Ribbon>
  );
}

function Tools() {
  return (
    <Toolbox>
      {['bands', 'cross', 'texts', 'picture', 'puzzle'].map(name =>
        <React.Fragment key={name}>
          <Tool $menu aria-label={name}>{tools[name]}</Tool>
          <ToolMenu aria-label={`${name} menu`}><Svg w={3} h={6}><path d="M0 0l3 3-3 3z" fill="#000" /></Svg></ToolMenu>
        </React.Fragment>
      )}
      <ToolRule />
      {['torn1', 'torn2', 'head', 'foot', 'top', 'bottom', 'calendar', 'rich', 'image', 'chart'].map(name =>
        <Tool key={name} aria-label={name}>{tools[name]}</Tool>
      )}
      <ToolRule />
      <Tool aria-label="Settings">{tools.hammer}</Tool>
    </Toolbox>
  );
}

function HeaderBand() {
  return (
    <>
      <BandHead $h={17}>grpHeaderVOUCHER_DATA; Condition: {'{VOUCHER_DATA.RefIDSortOrder}'}</BandHead>
      <BandBody $h={101}>
        <FileNote $x={1} $y={-17} $w={460} $h={32}>
          File: D:\Develop\MISA SME.NET 2014\2. SourceCode\MISA SME.NET 2014<br />
          \MISA.SME2014.UI.Main\Report\VATBackGround\Background_VAT_01.png
        </FileNote>
        <Flag $x={-1} $y={0} $w={4} $h={4} />
        <Picture $x={7} $y={14} $w={150} $h={94}>
          <Brand><span>M</span><span>I</span><em>S</em><span>A</span><sup>®</sup></Brand>
          <Slogan>PHẦN MỀM PHỔ BIẾN NHẤT</Slogan>
          {[-2, 73, 148].map(x => [-2, 45, 92].map(y =>
            (x !== 73 || y !== 45) && <Handle key={`${x},${y}`} $x={x} $y={y} />
          ))}
        </Picture>
        <TitleBox $x={192} $y={18} $w={332} $h={56}>
          <strong>HÓA ĐƠN GIÁ TRỊ GIA TĂNG</strong>
          <Flag as="i" $x={2} $y={2} $w={4} $h={4} />
          <div>{'{strSerialNo}'}</div>
        </TitleBox>
        <DateRow $x={239} $y={74} $w={253} $h={24}>
          <Field $label $w={44}>Ngày</Field>
          <Field $w={36}>{'{IIF('}</Field>
          <Field $label $w={43}>tháng</Field>
          <Field $w={36}>{'{IIF('}</Field>
          <Field $label $w={35}>năm</Field>
          <Field>{'{IIF(VO'}</Field>
        </DateRow>
        <Panel $x={523} $y={22} $w={182} $h={76}>
          <PanelName>Panel1</PanelName>
          <FieldRow><Field $label $w={58}>Mẫu số:</Field><Field>{'{VOUCHER_DATA'}</Field></FieldRow>
          <FieldRow><Field $label $w={66}>Ký hiệu:</Field><Field>{'{VOUCHER_'}</Field></FieldRow>
          <FieldRow><Field $label $w={27}>Số:</Field><Field $bold>{'{VOUCHER_DAT'}</Field></FieldRow>
        </Panel>
      </BandBody>
    </>
  );
}

function ReportPage() {
  return (
    <Paper>
      <Report>
        <HeaderBand />
        {bands.map(band =>
          <React.Fragment key={band.name}>
            <BandHead>{band.name}</BandHead>
            <BandBody $h={band.h} $after={band.after}>
              {band.rows.map((row, i) =>
                <FieldRow key={i}>
                  {row.map(([text, w, after], j) =>
                    <Field key={j} $label={j % 2 === 0} $w={w} $after={after}>{text}</Field>
                  )}
                </FieldRow>
              )}
            </BandBody>
          </React.Fragment>
        )}
        <BandHead>grpHeaderTitle; Condition:</BandHead>
        <BandBody $h={51}>
          <Columns>
            <colgroup>{columns.map(c => <col key={c[0]} width={c[2]} />)}</colgroup>
            <thead><tr>{columns.map(c => <th key={c[0]}>{c[0]}</th>)}</tr></thead>
            <tbody><tr>{columns.map(c => <td key={c[0]}>{c[1]}</td>)}</tr></tbody>
          </Columns>
        </BandBody>
        <DataHead $color="#5f9bd1">dbVOUCHER_DATA; Data Source: VOUCHER_DATA</DataHead>
      </Report>
      <Imprint>Công ty Cổ phần MISA (www.misa.com.vn) - 0101243150</Imprint>
      <PageMarker>
        <Svg w={25} h={14}>
          <path d="M0 1.500h3M20 1.500h4.500V5" stroke="#555" />
          <path d="M12.500 4.500h8v8h-8z" stroke="#555" /><path d="M14 7h5v3h-5z" fill="#555" />
        </Svg>
      </PageMarker>
    </Paper>
  );
}

function DesignArea() {
  return (
    <Editor>
      <PageTabs><PageTab><PageIcon />Page1</PageTab></PageTabs>
      <HRuler>
        <HScale>
          {marks(18).map(i => <Mark key={i} $tick={i % 2}>{i % 2 ? null : i * 5}</Mark>)}
        </HScale>
      </HRuler>
      <Desk>
        <VRuler>
          <VScale>
            {marks(14).map(i => <Mark key={i} $vertical $tick={i % 2}>{i % 2 ? null : i * 5}</Mark>)}
          </VScale>
        </VRuler>
        <Canvas><ReportPage /></Canvas>
        <Scroller>
          <Svg w={10} h={6}><path d="M0 6l5-5 5 5z" fill="#ababab" /></Svg>
          <Thumb />
          <Svg w={10} h={6}><path d="M0 0h10L5 5z" fill="#ababab" /></Svg>
        </Scroller>
      </Desk>
    </Editor>
  );
}

function Value({ name, value }) {
  if (name === 'Component Style') return <Swatch />;
  if (name !== 'Stretch') return value;
  return (
    <>
      <ValueSelect>
        <select aria-label={name} defaultValue="True"><option>True</option><option>False</option></select>
        <i><Svg w={7} h={4}><path d="M0 0h7L3.500 4z" fill="#000" /></Svg></i>
      </ValueSelect>
      <Options role="listbox" aria-label={`${name} values`}>
        <li role="option" aria-selected="true">True</li>
        <li role="option" aria-selected="false">False</li>
      </Options>
      <Frame $inset="-1px -1px -1px -153px" />
    </>
  );
}

function Properties() {
  return (
    <Side>
      <SideFrame>
        <SideHead>
          <span>Properties</span>
          <IconButton aria-label="Pin"><Svg w={8} h={9}><path d="M2.500 5V.5h3V5M5.500 0v5M0 5.500h8M4 6v3" stroke="#111" /></Svg></IconButton>
          <IconButton aria-label="Close"><Svg w={8} h={8}><path d="M0 1l8 6M8 1L0 7" stroke="#111" strokeWidth="1.800" /></Svg></IconButton>
        </SideHead>
        <PickerRow>
          <Picker>
            <select aria-label="Component"><option>Image1 : Image</option></select>
            <Svg w={7} h={4}><path d="M0 0h7L3.500 4z" fill="#000" /></Svg>
          </Picker>
          <SortButton aria-label="Sort"><SortIcon /></SortButton>
        </PickerRow>
        <PropTools>
          <IconButton aria-label="Categories">
            <Svg w={17} h={17}>
              <path d="M.5 1.500h6v5h-6zM.5 10.500h6v5h-6z" stroke="#4a7ab5" fill="#e4effa" />
              <path d="M2 4h3M3.500 2.500v3M2 13h3M3.500 11.500v3" stroke="#123" />
              <path d="M8 2.500h8M8 4.500h8M8 7.500h8M8 11.500h8M8 14.500h8" stroke="#666" strokeDasharray="3 1" />
            </Svg>
          </IconButton>
          <PropTool $on aria-label="Alphabetical"><SortIcon a="#2a4fb0" z="#9b2222" /></PropTool>
          <Rule $h={20} />
          <PropTool $on aria-label="Properties">
            <Svg w={13} h={12}><path d="M.5.5h12v11H.5z" stroke="#777" fill="#fff" /><path d="M2 2.500h2M5 2.500h6M2 4.500h2M5 4.500h6M2 6.500h2M5 6.500h6M2 8.500h2M5 8.500h6" stroke="#6f9fd0" /></Svg>
          </PropTool>
          <PropTool aria-label="Events"><Svg w={10} h={14}><path d="M5 0h4L6 5h4L2 14l2-6H0z" fill="#fdbf5c" /></Svg></PropTool>
          <Rule $h={20} />
          <PropTool aria-label="Pages">
            <Svg w={16} h={15}><path d="M.5.5h15v14H.5z" stroke="#aaa" fill="#e2e2e2" /><path d="M1 1h14v3H1z" fill="#b5b5b5" /><path d="M3.500 7.500h9v5h-9zM5 9.500h2M8 9.500h4" stroke="#999" /></Svg>
          </PropTool>
        </PropTools>
        <PropFrame>
          <PropTable>
            <tbody>
              {properties.map(([name, value, bold]) =>
                <PropRow key={name} $bold={bold} $selected={name === 'Stretch'}>
                  <th scope="row">{name}</th>
                  <td><Value name={name} value={value} /></td>
                </PropRow>
              )}
            </tbody>
          </PropTable>
          <PropScroll>
            <Svg w={7} h={4}><path d="M0 4l3.500-4L7 4z" fill="#444" /></Svg>
            <PropThumb><Svg w={7} h={8}><path d="M0 .5h7M0 3.500h7M0 6.500h7" stroke="#777" /></Svg></PropThumb>
            <Svg w={7} h={4}><path d="M0 0h7L3.500 4z" fill="#444" /></Svg>
          </PropScroll>
        </PropFrame>
        <Hint>
          <strong>Stretch</strong>
          A value indicates that this component will stretch the image till an image will get size equal in its size on a page.
        </Hint>
      </SideFrame>
      <SideTabs>
        <SideTabWrap>
          <SideTab $active>
            <Svg w={17} h={16}>
              <path d="M1.500 6.500h13v9h-13z" stroke="#999" fill="#fff" /><path d="M3 9.500h4M9 9.500h4M3 11.500h4M9 11.500h4M3 13.500h4M9 13.500h4" stroke="#7b96b8" />
              <path d="M4 6l5-5 4 1 2 3-4 2-3 3z" fill="#e0b24c" stroke="#96762a" /><path d="M13 2l3-1v6l-2-1z" fill="#54a04c" />
            </Svg>
            Properties
          </SideTab>
          <Frame $inset="-6px -4px -3px -5px" />
        </SideTabWrap>
        <SideTab>
          <Svg w={13} h={13}>
            <path d="M3.500.5h9v7h-9z" stroke="#8aa" fill="#fff" /><path d="M3 0h10v3H3z" fill="#4a81b8" />
            <path d="M.5 4.500h8v8h-8zM3 5v7M6 5v7M1 9.500h7" stroke="#999" fill="#fff" /><path d="M0 4h9v2H0z" fill="#4a81b8" />
          </Svg>
          Dictionary
        </SideTab>
        <SideTab>
          <Svg w={14} h={14}>
            <path d="M.5.5h13v13H.5z" stroke="#888" fill="#fff" /><path d="M2 3.500h4M4.500 3v8M5 6.500h1M5 10.500h1" stroke="#4a81b8" /><path d="M7 6.500h5M7 10.500h5" stroke="#4a81b8" strokeWidth="2" />
          </Svg>
          Report Tree
        </SideTab>
      </SideTabs>
    </Side>
  );
}

function StatusBar() {
  const sep = <Rule $h={16} $color="#8fa8d0" />;
  return (
    <Status>
      <span>Millimeters</span>
      <Svg w={5} h={3}><path d="M0 3l2.500-3L5 3z" fill="#fff" /></Svg>
      {sep}
      <Svg w={6} h={10}><path d="M0 0l6 5-6 5z" fill="#fff" /></Svg>
      <span>Report Checker</span>
      {sep}
      <span>Image1</span>
      {sep}
      <span>X:2,00  Y:4,00  Width:38,00  Height:24,00</span>
      <Spacer />
      {sep}
      <IconButton aria-label="Page width"><Svg w={15} h={13}><path d="M0 1h15v11H0z" fill="#fff" /><path d="M1 6.500l3-3v2h7v-2l3 3-3 3v-2H4v2z" fill={BLUE} /><path d="M4 2.500h7M4 10.500h7" stroke={BLUE} /></Svg></IconButton>
      <IconButton aria-label="Whole page"><Svg w={14} h={14}><path d="M0 0h14v14H0z" fill="#fff" /><path d="M4 4l3-3 3 3zM4 10l3 3 3-3z" fill={BLUE} /><path d="M3 5.500h8M3 8.500h8" stroke={BLUE} /></Svg></IconButton>
      <IconButton aria-label="One page"><Svg w={13} h={14}><path d="M0 0h13v14H0z" fill="#fff" /><path d="M2.500 1.500h8v11h-8zM4 4.500h5M4 6.500h5M4 8.500h5" stroke={BLUE} /></Svg></IconButton>
      <IconButton aria-label="Actual size"><Svg w={16} h={15}><path d="M1 0h7l4 4v4H1z" fill="#fff" /><path d="M3 3.500h5M3 5.500h7" stroke={BLUE} /><path d="M1.500 9v5M14 .5h-3" stroke="#fff" strokeDasharray="1 1" /><path d="M4.500 10v4M7.500 10.500h2v3h-2zM12.500 10.500h2v3h-2z" stroke="#fff" /></Svg></IconButton>
      <span>100%</span>
      <ZoomGroup>
        <IconButton aria-label="Zoom out"><Svg w={9} h={9}><path d="M0 4.500h9" stroke="#fff" strokeWidth="2" /></Svg></IconButton>
        <Zoom type="range" aria-label="Zoom" defaultValue="50" />
        <IconButton aria-label="Zoom in"><Svg w={9} h={9}><path d="M0 4.500h9M4.500 0v9" stroke="#fff" strokeWidth="2" /></Svg></IconButton>
      </ZoomGroup>
      <Svg w={26} h={22}><path d="M23 13h2M19 17h2M23 17h2M15 21h2M19 21h2M23 21h2" stroke="#fff" strokeWidth="2" /></Svg>
    </Status>
  );
}

const Balloon = ({ x, y, w, h, d, children }) => (
  <Callout $x={x} $y={y} $w={w} $h={h}>
    <svg width={w} height={h} aria-hidden="true"><path d={d} fill="#fff" stroke={RED} strokeWidth="2" strokeLinejoin="round" /></svg>
    <span>{children}</span>
  </Callout>
);

export default function App() {
  return (
    <>
      <Global />
      <Window>
        <TitleBar>
          <Quick>
            <AppIcon />
            <Rule $h={17} />
            <IconButton aria-label="Save"><SaveIcon /></IconButton>
            <IconButton $w={18} aria-label="Undo"><UndoIcon /></IconButton>
            <IconButton $w={18} aria-label="Redo"><UndoIcon flip /></IconButton>
            <IconButton $w={18} aria-label="Customize"><Svg w={5} h={7}><path d="M0 .5h5" stroke="#222" /><path d="M0 3h5L2.500 6z" fill="#222" /></Svg></IconButton>
          </Quick>
          <Title>VATVoucher_3L_SP.mrt  - Designer</Title>
          <WindowButtons>
            <IconButton aria-label="Minimize"><Svg w={11} h={11}><path d="M1 10h9" stroke="#111" strokeWidth="2" /></Svg></IconButton>
            <IconButton aria-label="Maximize"><Svg w={11} h={11}><path d="M.5.5h10v10H.5zM1 1.500h9" stroke="#111" /></Svg></IconButton>
            <IconButton aria-label="Close window"><Svg w={11} h={11}><path d="M1 1l9 9M10 1l-9 9" stroke="#111" strokeWidth="2" /></Svg></IconButton>
          </WindowButtons>
        </TitleBar>
        <Tabs>
          <FileTab>FILE</FileTab>
          <Tab $active>HOME</Tab>
          <Tab>PAGE</Tab>
          <Tab>LAYOUT</Tab>
          <Language><span>EN</span><Down c="#555" /><b>?</b></Language>
        </Tabs>
        <RibbonBar />
        <Workspace>
          <Tools />
          <DesignArea />
          <Properties />
        </Workspace>
        <StatusBar />
        <Balloon x={45} y={396} w={120} h={47} d="M14 1h37L86-17 63 1h42q14 0 14 14v17q0 14-14 14H15Q1 46 1 32V15Q1 1 15 1z">
          {'1. Chọn hình ảnh\nlogo'}
        </Balloon>
        <Balloon x={753} y={583} w={197} h={50} d="M21 1h155q20 0 20 17v14q0 17-20 17h-24l69 24L139 49H21Q1 49 1 32V18Q1 1 21 1z">
          {'3. Tại thuộc tính này đổi\ntừ False về True'}
        </Balloon>
        <Balloon x={831} y={743} w={125} h={49} d="M17 1h91q16 0 16 15v17q0 15-16 15H71l56 10L56 48H17Q1 48 1 33V16Q1 1 17 1z">
          {'2. Chọn\nProperties'}
        </Balloon>
      </Window>
    </>
  );
}
